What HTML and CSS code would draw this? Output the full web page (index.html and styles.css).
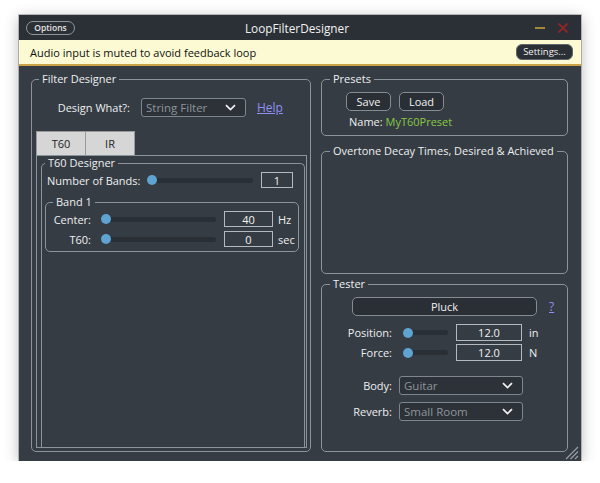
FILE: index.html
```html
<!DOCTYPE html>
<html>
<head>
<meta charset="utf-8">
<link rel="stylesheet" href="styles.css">
</head>
<body>
<div class="window">
  <div class="titlebar">
    <button class="opt-btn">Options</button>
    <div class="title">LoopFilterDesigner</div>
    <div class="winctrls">
      <span class="min"></span>
      <svg class="close" width="10" height="10" viewBox="0 0 10 10"><path d="M0.5 0.5L9.5 9.5M9.5 0.5L0.5 9.5" stroke="#9a2424" stroke-width="1.6" fill="none"/></svg>
    </div>
  </div>
  <div class="notice">
    <span>Audio input is muted to avoid feedback loop</span>
    <button class="settings">Settings...</button>
  </div>
  <div class="content">
    <div class="group left">
      <div class="gtitle gt-left">Filter Designer</div>
      <div class="design-row">
        <span class="dlabel">Design What?:</span>
        <div class="combo dcombo"><span>String Filter</span><svg width="11" height="7" viewBox="0 0 11 7"><path d="M1 1.2L5.5 5.5L10 1.2" stroke="#f2f2f2" stroke-width="1.7" fill="none"/></svg></div>
        <a class="link help">Help</a>
      </div>
      <div class="tabs">
        <div class="tab">T60</div>
        <div class="tab tab2">IR</div>
      </div>
      <div class="tabpanel">
        <div class="group t60">
          <div class="gtitle gt-t60">T60 Designer</div>
          <div class="nb-row">
            <span class="nblabel">Number of Bands:</span>
            <div class="slider nbslider"><span class="knob"></span><span class="track"></span></div>
            <div class="vbox nbbox">1</div>
          </div>
          <div class="group band">
            <div class="gtitle gt-band">Band 1</div>
            <div class="brow first">
              <span class="blabel">Center:</span>
              <div class="slider bslider"><span class="knob"></span><span class="track"></span></div>
              <div class="vbox bbox">40</div>
              <span class="unit">Hz</span>
            </div>
            <div class="brow">
              <span class="blabel">T60:</span>
              <div class="slider bslider"><span class="knob"></span><span class="track"></span></div>
              <div class="vbox bbox">0</div>
              <span class="unit">sec</span>
            </div>
          </div>
        </div>
      </div>
    </div>
    <div class="rcol">
      <div class="group presets">
        <div class="gtitle">Presets</div>
        <div class="pbtns">
          <button class="btn pbtn">Save</button>
          <button class="btn pbtn">Load</button>
        </div>
        <div class="pname">Name: <span class="green">MyT60Preset</span></div>
      </div>
      <div class="group overtone">
        <div class="gtitle">Overtone Decay Times, Desired &amp; Achieved</div>
      </div>
      <div class="group tester">
        <div class="gtitle">Tester</div>
        <div class="pluck-row">
          <button class="btn pluck">Pluck</button>
          <a class="link qmark">?</a>
        </div>
        <div class="trow first">
          <span class="tlabel">Position:</span>
          <div class="slider tslider"><span class="knob"></span><span class="track"></span></div>
          <div class="vbox tbox">12.0</div>
          <span class="unit tunit">in</span>
        </div>
        <div class="trow">
          <span class="tlabel">Force:</span>
          <div class="slider tslider"><span class="knob"></span><span class="track"></span></div>
          <div class="vbox tbox">12.0</div>
          <span class="unit tunit">N</span>
        </div>
        <div class="crow first">
          <span class="tlabel clabel">Body:</span>
          <div class="combo tcombo"><span>Guitar</span><svg width="11" height="7" viewBox="0 0 11 7"><path d="M1 1.2L5.5 5.5L10 1.2" stroke="#f2f2f2" stroke-width="1.7" fill="none"/></svg></div>
        </div>
        <div class="crow">
          <span class="tlabel clabel">Reverb:</span>
          <div class="combo tcombo"><span>Small Room</span><svg width="11" height="7" viewBox="0 0 11 7"><path d="M1 1.2L5.5 5.5L10 1.2" stroke="#f2f2f2" stroke-width="1.7" fill="none"/></svg></div>
        </div>
      </div>
    </div>
  </div>
  <svg class="resize" width="16" height="16" viewBox="0 0 16 16"><path d="M15 3L3 15M15 7.5L7.5 15M15 12L12 15" stroke="#9aa3aa" stroke-width="1.1" fill="none"/></svg>
</div>
</body>
</html>
```
FILE: styles.css
```css
* { box-sizing: border-box; }
body {
  margin: 0;
  background: #ffffff;
  font-family: "Open Sans", "Liberation Sans", sans-serif;
  font-size: 11px;
  color: #eceff1;
}
button { font-family: inherit; padding: 0; cursor: default; }
.window {
  margin: 15px 0 0 19px;
  width: 562px;
  height: 446px;
  background: #363c43;
  box-shadow: 0 3px 14px rgba(0,0,0,0.28), 0 0 0 1px rgba(0,0,0,0.22);
  display: flex;
  flex-direction: column;
  position: relative;
}
.titlebar {
  height: 25px;
  background: #2b3036;
  display: grid;
  grid-template-columns: 1fr auto 1fr;
  align-items: center;
  padding: 0 13px 0 7px;
}
.opt-btn {
  justify-self: start;
  width: 49px;
  height: 14px;
  border: 1px solid #8e959b;
  border-radius: 7px;
  background: transparent;
  color: #e6e6e6;
  font-size: 8.5px;
  font-weight: 600;
  line-height: 12px;
}
.title { font-size: 11.8px; color: #f2f2f2; line-height: 16px; }
.winctrls { justify-self: end; display: flex; align-items: center; gap: 13px; }
.min { width: 10px; height: 2px; background: #a08a3a; }
.close { display: block; }
.notice {
  height: 26px;
  background: #fbfad3;
  border-bottom: 2px solid #c9a447;
  display: flex;
  align-items: center;
  justify-content: space-between;
  padding: 0 8px 0 11px;
  color: #111;
  font-size: 11px;
}
.settings {
  width: 57px;
  height: 16px;
  border-radius: 6px;
  background: #2b3036;
  border: 1px solid #5f656b;
  color: #eee;
  font-size: 9.5px;
  line-height: 14px;
}
.content {
  flex: 1;
  display: flex;
  gap: 10px;
  padding: 13px 13px 9px 12px;
}
.group {
  border: 1px solid #8b949b;
  border-radius: 5px;
  display: flex;
  flex-direction: column;
}
.gtitle {
  align-self: flex-start;
  margin: -8px 0 0 8px;
  padding: 0 3px;
  background: #363c43;
  line-height: 14px;
  font-size: 11px;
  color: #eceff1;
}
.left { width: 280px; }
.gt-left { margin-left: 7px; }
.design-row { display: flex; align-items: center; margin-top: 12px; height: 19px; }
.dlabel { width: 98px; text-align: right; margin-right: 11px; }
.combo {
  height: 19px;
  border: 1px solid #7e878e;
  border-radius: 3px;
  background: #2c3238;
  display: flex;
  align-items: center;
  justify-content: space-between;
  padding: 0 9px 0 4px;
  color: #8d949a;
  font-size: 11.5px;
}
.combo svg { display: block; }
.dcombo { width: 105px; margin-right: 11px; }
.link { color: #8f8ff5; text-decoration: underline; font-size: 12px; }
.tabs { display: flex; margin: 14px 0 0 4px; }
.tab {
  width: 50px;
  height: 24px;
  background: #d6d6d6;
  color: #222;
  display: flex;
  align-items: center;
  justify-content: center;
  border: 1px solid #9a9a9a;
  border-bottom: none;
  font-size: 11px;
}
.tab2 { width: 49px; border-left: none; }
.tabpanel {
  flex: 1;
  margin: 0 3px 3px 4px;
  border: 1px solid #8b949b;
  display: flex;
  flex-direction: column;
  padding: 0 1px 0 4px;
}
.t60 { flex: 1; margin-top: 7px; border-bottom: none; border-radius: 5px 5px 0 0; }
.gt-t60 { margin-left: 3px; }
.nb-row { display: flex; align-items: center; margin-top: 2px; height: 16px; padding-left: 5px; }
.nblabel { width: 100px; }
.slider { display: flex; align-items: center; height: 10px; }
.knob {
  position: relative;
  z-index: 1;
  width: 10px;
  height: 10px;
  border-radius: 50%;
  background: #5ea3d1;
  flex: none;
}
.track { flex: 1; height: 5px; border-radius: 3px; background: #2a2f35; margin-left: -5px; }
.nbslider { width: 106px; margin-right: 8px; }
.vbox {
  height: 16px;
  border: 1px solid #b3b9be;
  display: flex;
  align-items: center;
  justify-content: center;
  color: #f2f2f2;
  font-size: 11px;
}
.nbbox { width: 32px; }
.band { margin: 14px 5px 0 3px; padding-bottom: 4px; }
.gt-band { margin-left: 7px; }
.brow { display: flex; align-items: center; height: 16px; margin-top: 4px; }
.brow.first { margin-top: 2px; }
.blabel { width: 45px; text-align: right; margin-right: 10px; }
.bslider { width: 115px; margin-right: 8px; }
.bbox { width: 49px; }
.unit { margin-left: 5px; }
.rcol { width: 247px; display: flex; flex-direction: column; }
.presets { height: 57px; }
.overtone { height: 123px; margin-top: 15px; }
.tester { flex: 1; margin-top: 10px; }
.pbtns { display: flex; gap: 8px; margin: 6px 0 0 24px; }
.btn {
  height: 19px;
  border: 1px solid #858c92;
  border-radius: 5px;
  background: #2a2f35;
  color: #f0f0f0;
  font-size: 11px;
}
.pbtn { width: 45px; }
.pname { margin: 4px 0 0 27px; line-height: 14px; }
.green { color: #86c944; }
.pluck-row { display: flex; align-items: center; margin: 6px 0 0 30px; }
.pluck { width: 185px; margin-right: 12px; }
.trow { display: flex; align-items: center; height: 17px; margin-top: 3px; }
.trow.first { margin-top: 8px; }
.tlabel { width: 70px; text-align: right; margin-right: 11px; }
.tslider { width: 45px; margin-right: 8px; }
.tbox { width: 66px; height: 17px; }
.tunit { margin-left: 7px; }
.crow { display: flex; align-items: center; height: 19px; margin-top: 7px; }
.crow.first { margin-top: 15px; }
.clabel { margin-right: 7px; }
.tcombo { width: 124px; }
.resize { position: absolute; right: 2px; bottom: 1px; }
```
